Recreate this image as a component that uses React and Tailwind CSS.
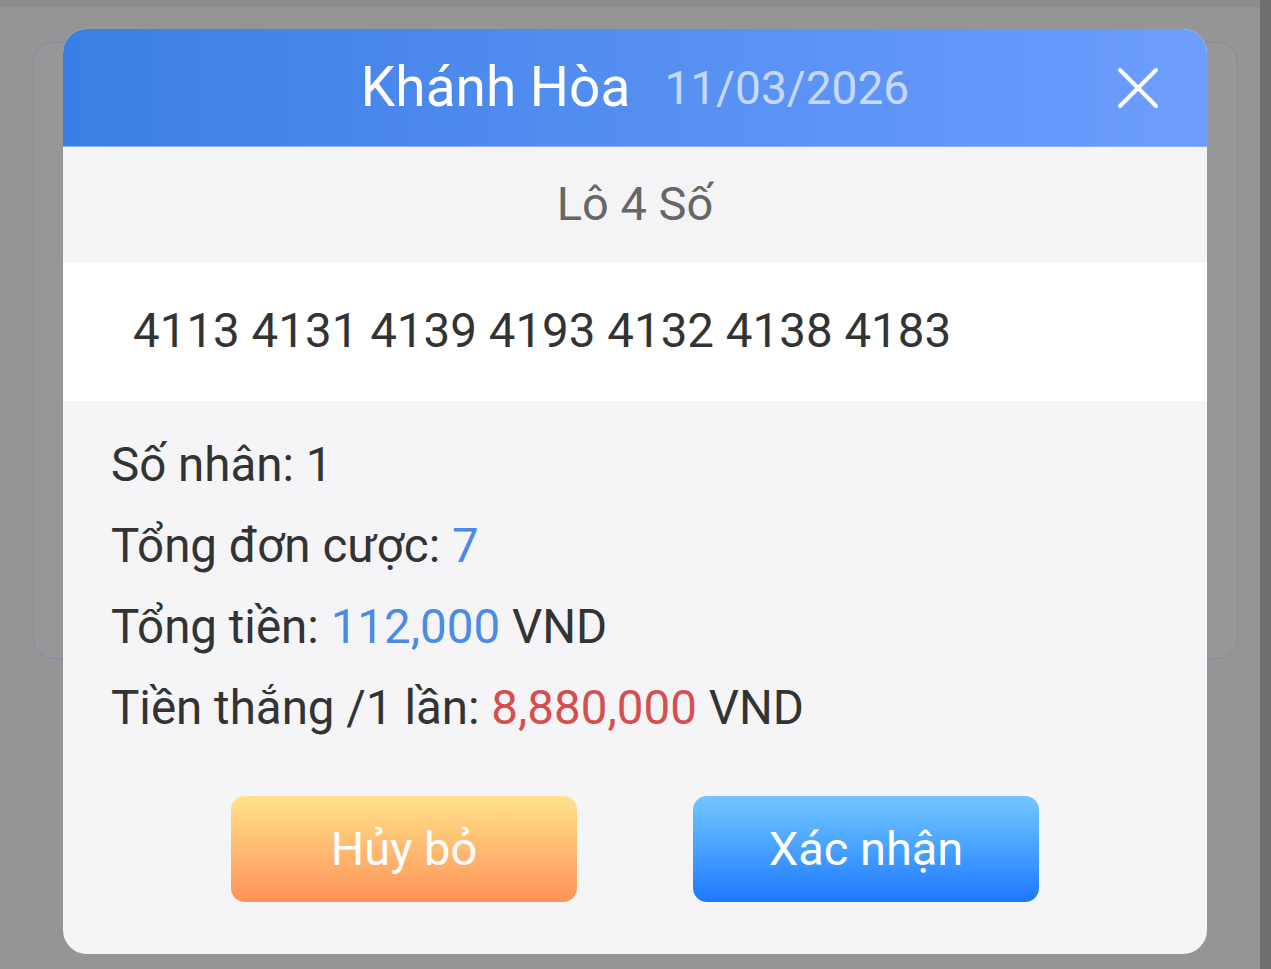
import { useState } from 'react';

const soDat = ['4113', '4131', '4139', '4193', '4132', '4138', '4183'];

function IconDong() {
  return (
    <svg width="42" height="42" viewBox="0 0 42 42" fill="none">
      <path d="M3 3 L39 39 M39 3 L3 39" stroke="#fff" strokeWidth="4" strokeLinecap="round" />
    </svg>
  );
}

export default function App() {
  const [mo, setMo] = useState(true);

  return (
    <div className="relative min-h-[969px] w-full overflow-hidden bg-[#959595] font-['Roboto','Noto_Sans',sans-serif]">
      {/* nền phía sau */}
      <div className="absolute left-0 top-0 h-[7px] w-full bg-[#8c8c8e]" />
      <div className="absolute right-0 top-0 h-full w-[11px] bg-[#707070]" />
      <div className="absolute left-[33px] top-[42px] h-[617px] w-[1205px] rounded-[20px] border border-[#858c9c] bg-[#979799]" />

      {mo && (
        <div className="relative flex justify-start pl-[63px] pt-[29px]">
          <div className="w-[1144px] overflow-hidden rounded-[24px] bg-[#f5f5f7]">
            {/* Header */}
            <div className="flex h-[118px] items-center bg-gradient-to-r from-[#3a7fe3] to-[#6d9dff] border-b border-[#8fb2f6]">
              <div className="w-[90px]" />
              <div className="flex flex-1 items-center justify-center gap-[34px]">
                <span className="text-[55px] leading-none text-white">Khánh Hòa</span>
                <span className="text-[46px] leading-none text-white/65">11/03/2026</span>
              </div>
              <button onClick={() => setMo(false)} className="flex w-[90px] items-center justify-start pl-0">
                <IconDong />
              </button>
            </div>

            {/* Loại cược */}
            <div className="flex h-[115px] items-center justify-center bg-[#f4f4f6]">
              <span className="text-[47px] text-[#666]">Lô 4 Số</span>
            </div>

            {/* Số đã chọn */}
            <div className="flex h-[139px] items-center bg-white px-[70px]">
              <span className="text-[47.5px] text-[#333]">{soDat.join(' ')}</span>
            </div>

            {/* Thông tin */}
            <div className="px-[48px] pt-[24px] text-[47.5px] leading-[81px] text-[#333]">
              <p>Số nhân: 1</p>
              <p>
                Tổng đơn cược: <span className="text-[#4b8ae6]">7</span>
              </p>
              <p>
                Tổng tiền: <span className="text-[#4b8ae6]">112,000</span> VND
              </p>
              <p>
                Tiền thắng /1 lần: <span className="text-[#d64f4f]">8,880,000</span> VND
              </p>
            </div>

            {/* Nút */}
            <div className="flex justify-center gap-[116px] pb-[52px] pt-[47px]">
              <button className="h-[106px] w-[346px] rounded-[14px] bg-gradient-to-b from-[#ffe28a] to-[#ff9258] text-[47px] text-white">
                Hủy bỏ
              </button>
              <button className="h-[106px] w-[346px] rounded-[14px] bg-gradient-to-b from-[#72c7ff] to-[#1e77ff] text-[47px] text-white">
                Xác nhận
              </button>
            </div>
          </div>
        </div>
      )}
    </div>
  );
}
